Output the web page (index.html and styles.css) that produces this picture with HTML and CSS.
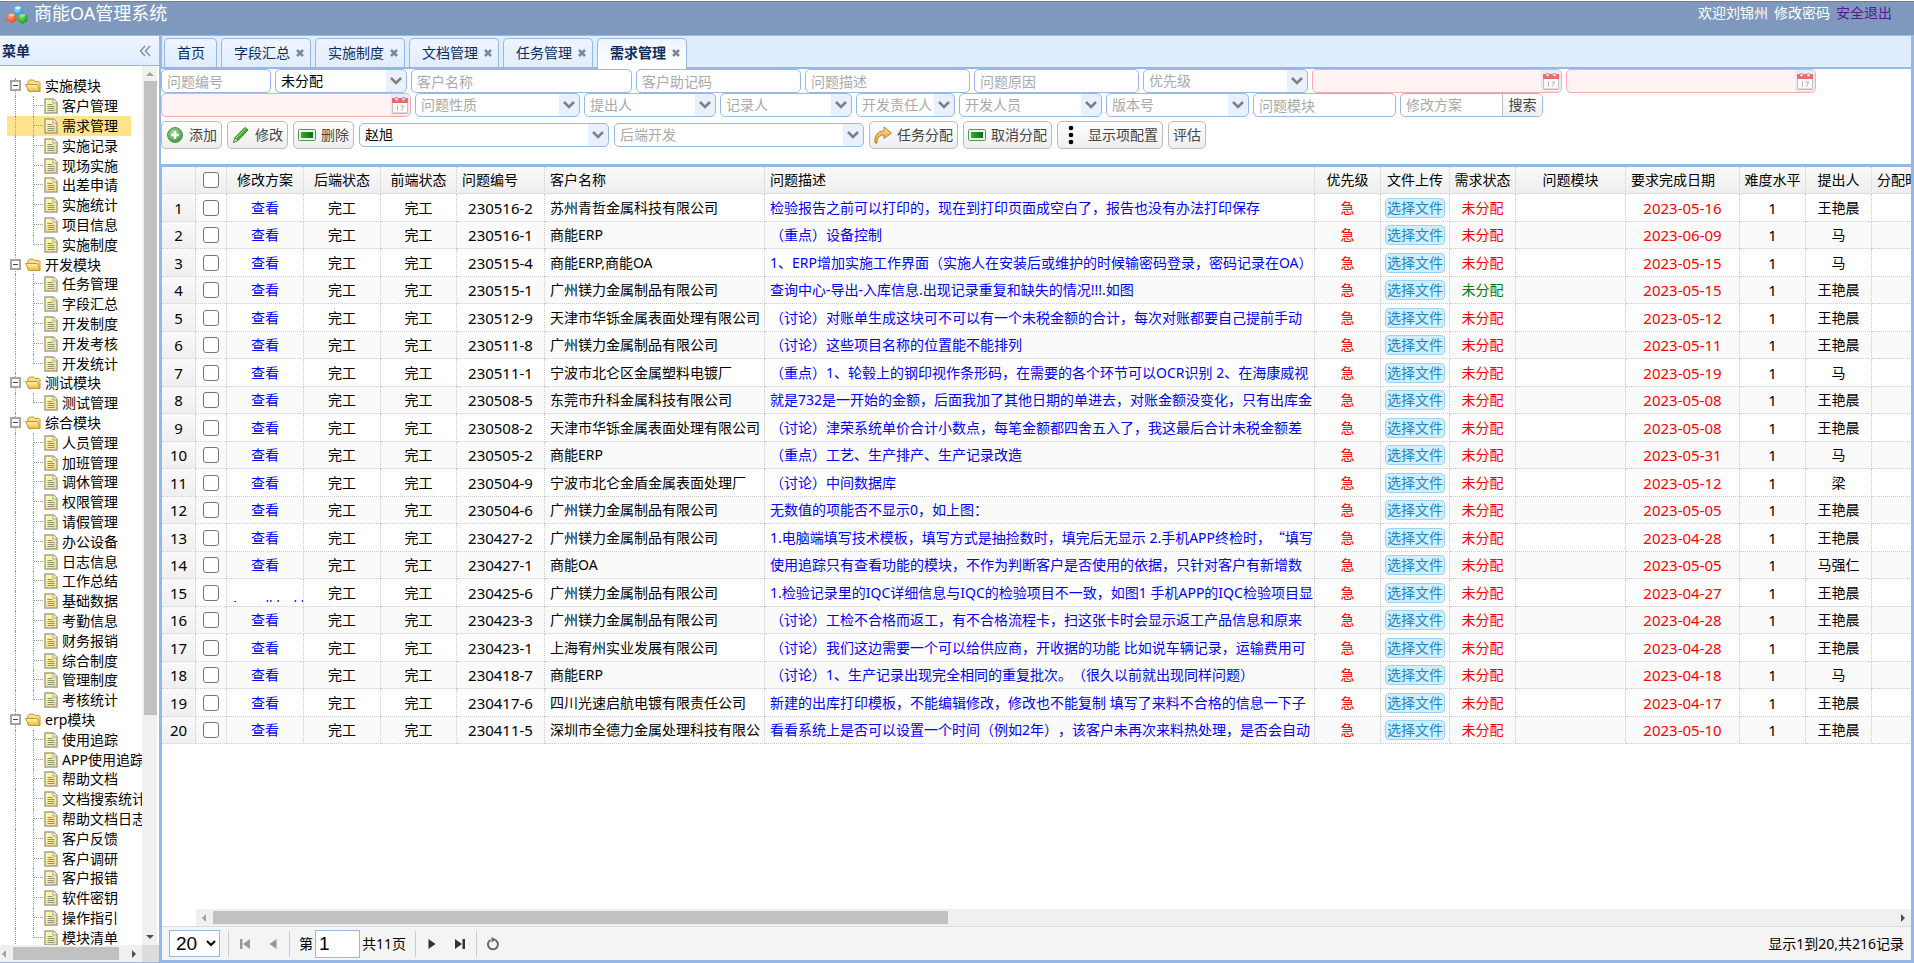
FILE: index.html
```html
<!DOCTYPE html>
<html lang="zh-CN">
<head>
<meta charset="utf-8">
<title>商能OA管理系统</title>
<link rel="stylesheet" href="styles.css">
</head>
<body>
<svg class="sprite" aria-hidden="true">
  <defs>
    <linearGradient id="g-folder" x1="0" y1="0" x2="0" y2="1"><stop offset="0" stop-color="#fff6b8"/><stop offset="1" stop-color="#e9b93c"/></linearGradient>
    <linearGradient id="g-file" x1="0" y1="0" x2="1" y2="1"><stop offset="0" stop-color="#ffffb5"/><stop offset="1" stop-color="#fbd98c"/></linearGradient>
    <linearGradient id="g-green" x1="0" y1="0" x2="1" y2="0"><stop offset="0" stop-color="#2fae2f"/><stop offset="1" stop-color="#0b720b"/></linearGradient>
    <linearGradient id="g-arrow" x1="0" y1="0" x2="0" y2="1"><stop offset="0" stop-color="#ffe08a"/><stop offset="1" stop-color="#f0941a"/></linearGradient>
    <radialGradient id="g-add" cx=".4" cy=".35" r=".7"><stop offset="0" stop-color="#a5d99a"/><stop offset="1" stop-color="#3d9443"/></radialGradient>
    <radialGradient id="g-red" cx=".4" cy=".3" r=".8"><stop offset="0" stop-color="#ffa27a"/><stop offset="1" stop-color="#e0400c"/></radialGradient>
    <radialGradient id="g-blue" cx=".4" cy=".3" r=".8"><stop offset="0" stop-color="#a5e4ff"/><stop offset="1" stop-color="#1586cf"/></radialGradient>
    <radialGradient id="g-lime" cx=".4" cy=".3" r=".8"><stop offset="0" stop-color="#7fe07a"/><stop offset="1" stop-color="#0c8a1c"/></radialGradient>
    <symbol id="i-folder" viewBox="0 0 16 16"><path d="M3 13V3.500l1.500-1.500h4l1.500 1.500h4l1 1V13z" fill="#f8df8c" stroke="#c9962a"/><path d="M.5 6.500h12l2.500 7H4z" fill="url(#g-folder)" stroke="#c9962a"/></symbol>
    <symbol id="i-file" viewBox="0 0 14 16"><path d="M1 1h8.500L13 4.500V15H1z" fill="url(#g-file)" stroke="#a3a18c" stroke-width="1.500"/><path d="M9 1v4h4" fill="#fff" stroke="#a3a18c"/><path d="M3.500 6.500h5M3.500 8.500h7M3.500 10.500h7M3.500 12.500h7" stroke="#8f9474"/></symbol>
    <symbol id="i-date" viewBox="0 0 16 18"><path d="M.5 3.500h15V17H.5z" fill="#fbf8f6" stroke="#c9c0bd"/><path d="M0 2h16v5H0z" fill="#ee6a66"/><circle cx="4.500" cy="3" r="1.700" fill="#f6efef" stroke="#c88"/><circle cx="11.500" cy="3" r="1.700" fill="#f6efef" stroke="#c88"/><path d="M5.500 9.500v5M8.500 10h3l-2 4.500" fill="none" stroke="#b9b4b4"/><path d="M1 17.500h14" stroke="#bbb"/></symbol>
    <symbol id="i-cut" viewBox="0 0 18 16"><rect x=".5" y="2.500" width="17" height="11" rx="1" fill="#eaf5ea" stroke="#4d9a52"/><path d="M3 5h12v6H3z" fill="url(#g-green)"/></symbol>
  </defs>
</svg>

<div class="app">
  <header class="topbar">
    <svg class="logo" viewBox="0 0 22 20" aria-hidden="true">
      <path d="M12 1l4.500 2v5L12 10.500 7.500 8V3z" fill="url(#g-blue)"/>
      <path d="M5.500 8l5 2v5.500l-5 2.500-5-2.500V10z" fill="url(#g-red)"/>
      <path d="M16.500 8.500l5 2V16l-5 3-5-3v-5.500z" fill="url(#g-lime)"/>
      <ellipse cx="12" cy="2.800" rx="3" ry="1.300" fill="#d3f2ff"/><ellipse cx="5.500" cy="10" rx="3" ry="1.300" fill="#ffc1a0"/><ellipse cx="16.500" cy="10.500" rx="3" ry="1.300" fill="#98e88e"/>
    </svg>
    <h1 class="brand">商能OA管理系统</h1>
    <nav class="account"><span>欢迎刘锦州</span><a href="#" class="account-link">修改密码</a><a href="#" class="account-exit">安全退出</a></nav>
  </header>

  <div class="body">
    <aside class="sidebar">
      <div class="side-head"><h2 class="side-title">菜单</h2>
        <button class="collapse" type="button" aria-label="收起"><svg viewBox="0 0 12 12" width="12" height="12"><path d="M6 1L1.500 6 6 11M11 1L6.500 6 11 11" fill="none" stroke="#8a919c" stroke-width="1.500"/></svg></button>
      </div>
      <div class="side-body">
        <ul class="tree" id="tree"></ul>
        <div class="vbar"><span class="tri up"></span><span class="vthumb"></span><span class="tri down"></span></div>
        <div class="hbar side-hbar"><span class="tri left"></span><span class="hthumb"></span><span class="tri right"></span></div>
        <div class="corner"></div>
      </div>
    </aside>

    <main class="main">
      <nav class="tabs" id="tabs"></nav>

      <form class="toolbar">
        <div class="row" id="filters1"></div>
        <div class="row" id="filters2"></div>
        <div class="row actions">
          <button type="button" class="btn"><svg width="18" height="18" viewBox="0 0 18 18"><circle cx="9" cy="9" r="7.500" fill="url(#g-add)" stroke="#4b9a50"/><path d="M9 5v8M5 9h8" stroke="#fff" stroke-width="2.500"/></svg>添加</button>
          <button type="button" class="btn"><svg width="18" height="18" viewBox="0 0 18 18"><path d="M1.500 16.500l1.500-5L13 1.500l3 2.500L6 14.500z" fill="#41b02d" stroke="#2b7d24"/><path d="M4 12L14 2.500" stroke="#a6e88f"/><path d="M1.500 16.500l1.500-4.500 2.500 2.500z" fill="#e8d9b0" stroke="#777" stroke-width=".5"/></svg>修改</button>
          <button type="button" class="btn"><svg width="18" height="16"><use href="#i-cut"/></svg>删除</button>
          <select class="field combo w250" aria-label="前端开发"><option>赵旭</option></select>
          <select class="field combo w250 empty" aria-label="后端开发"><option>后端开发</option></select>
          <button type="button" class="btn"><svg width="18" height="18" viewBox="0 0 18 18"><path d="M1 17C0 9 4 5 10 5V1l7.500 6L10 12.500V9C6 9 3 11 3 17z" fill="url(#g-arrow)" stroke="#a98a55"/></svg>任务分配</button>
          <button type="button" class="btn"><svg width="18" height="16"><use href="#i-cut"/></svg>取消分配</button>
          <button type="button" class="btn wide"><svg width="18" height="20" viewBox="0 0 18 20"><circle cx="9" cy="3" r="2.300"/><circle cx="9" cy="10" r="2.300"/><circle cx="9" cy="17" r="2.300"/></svg>显示项配置</button>
          <button type="button" class="btn">评估</button>
        </div>
      </form>

      <section class="grid">
        <div class="grid-view">
          <table class="data">
            <colgroup><col class="c34"><col class="c31"><col class="c77"><col class="c77"><col class="c76"><col class="c88"><col class="c220"><col class="c550"><col class="c66"><col class="c69"><col class="c66"><col class="c110"><col class="c114"><col class="c66"><col class="c66"><col class="c110"></colgroup>
            <thead><tr><th></th><th><input type="checkbox" class="check" aria-label="全选"></th><th>修改方案</th><th>后端状态</th><th>前端状态</th><th class="left">问题编号</th><th class="left">客户名称</th><th class="left">问题描述</th><th>优先级</th><th>文件上传</th><th>需求状态</th><th>问题模块</th><th class="left">要求完成日期</th><th>难度水平</th><th>提出人</th><th class="left">分配时间</th></tr></thead>
            <tbody id="rows"></tbody>
          </table>
        </div>
        <div class="hbar grid-hbar"><span class="tri left"></span><span class="hthumb"></span><span class="tri right"></span></div>
        <footer class="pager">
          <select class="page-size" aria-label="每页条数"><option>20</option></select>
          <span class="sep"></span>
          <button type="button" class="pbtn off" aria-label="首页"><svg width="12" height="12"><path d="M1 1h2.500v10H1zM11 1v10L4 6z"/></svg></button>
          <button type="button" class="pbtn off" aria-label="上一页"><svg width="12" height="12"><path d="M9.500 1v10L2.500 6z"/></svg></button>
          <span class="sep"></span>
          <label class="page-label" for="page">第</label><input class="page-input" id="page" value="1"><span class="page-total">共11页</span>
          <span class="sep"></span>
          <button type="button" class="pbtn" aria-label="下一页"><svg width="12" height="12"><path d="M2.500 1v10l7-5z"/></svg></button>
          <button type="button" class="pbtn" aria-label="末页"><svg width="12" height="12"><path d="M8.500 1H11v10H8.500zM1 1v10l7-5z"/></svg></button>
          <span class="sep"></span>
          <button type="button" class="pbtn" aria-label="刷新"><svg width="14" height="14" viewBox="0 0 14 14"><path d="M4.500 3A5 5 0 1 0 9 2.800" fill="none" stroke="#6b6461" stroke-width="2"/><path d="M5.500 0v5.500L10 2.500z" fill="#6b6461"/></svg></button>
          <span class="page-info">显示1到20,共216记录</span>
        </footer>
      </section>
    </main>
  </div>
</div>
<script src="app.js"></script>
</body>
</html>
```

FILE: styles.css
```css
* { box-sizing: border-box; }

body {
  margin: 0;
  font: 14px/20px "Noto Sans", "Noto Sans CJK SC", sans-serif;
  text-spacing-trim: space-all;
  color: #000;
  background: #fff;
}
button, input, select { font: inherit; color: inherit; margin: 0; }
a { text-decoration: none; }
.sprite { position: absolute; width: 0; height: 0; }

.app { display: flex; flex-direction: column; height: 100vh; padding-top: 1px; overflow: hidden; }

/* top bar */
.topbar {
  display: flex;
  align-items: flex-start;
  flex: none;
  height: 35px;
  padding: 0 22px 0 6px;
  background: #7f99be;
  border-top: 1px solid #777f86;
  border-bottom: 1px solid #95b8e7;
  color: #fff;
}
.logo { width: 22px; height: 20px; margin-top: 3px; }
.brand { margin: 0 auto 0 6px; font-size: 18px; line-height: 22px; font-weight: 400; }
.account { display: flex; gap: 6px; line-height: 22px; }
.account-link { color: #fff; }
.account-exit { color: #551a8b; }

.body { display: flex; flex: 1; min-height: 0; }

/* sidebar */
.sidebar { display: flex; flex-direction: column; flex: none; width: 159px; border-bottom: 1px solid #95b8e7; }
.side-head {
  display: flex;
  align-items: center;
  justify-content: space-between;
  height: 30px;
  padding: 0 8px 0 2px;
  background: linear-gradient(#eff5ff, #e0ecff);
  border-bottom: 1px solid #95b8e7;
}
.side-title { margin: 0; font-size: 14px; color: #0e2d5f; }
.collapse { display: flex; padding: 0; border: 0; background: none; }
.side-body { display: grid; grid-template: minmax(0, 1fr) 17px / minmax(0, 1fr) 17px; flex: 1; min-height: 0; }
.tree { margin: 0; padding: 10px 0 0 7px; list-style: none; overflow: hidden; white-space: nowrap; }
.node { display: flex; align-items: center; height: 20px; width: 124px; }
.node:nth-child(5n) { height: 19px; }
.node.on { background: #ffe48d; }
.node a { color: #000; }
.trunk, .branch, .twist { position: relative; flex: none; align-self: stretch; }
.trunk, .twist { width: 18px; }
.branch { width: 19px; }
.trunk::before, .twist::before, .branch::before { content: ""; position: absolute; left: 8px; top: 0; bottom: 0; border-left: 1px dotted #999; }
.branch::after { content: ""; position: absolute; left: 9px; right: 1px; top: 9px; border-top: 1px dotted #999; }
.branch.last::before { bottom: 50%; }
.node.first .twist::before { top: 2px; }
.twist i { position: absolute; left: 3px; top: 4px; width: 11px; height: 11px; border: 2px solid #a5a5a5; background: linear-gradient(#444, #444) center / 5px 1px no-repeat #fff; }
.folder { flex: none; width: 16px; height: 16px; margin-right: 4px; }
.file { flex: none; width: 14px; height: 16px; margin-right: 4px; }

/* scroll bars */
.vbar { display: flex; flex-direction: column; align-items: center; width: 15px; background: #f0f0f0; padding: 6px 0; }
.vthumb { width: 13px; flex: 0 1 634px; margin: 5px 0 auto 2px; background: #c1c1c1; }
.hbar { display: flex; align-items: center; background: #f0f0f0; }
.hthumb { height: 13px; background: #c1c1c1; }
.corner { background: #dcdcdc; }
.tri { flex: none; width: 0; height: 0; border: 4px solid transparent; }
.tri.up { border-top: 0; border-bottom-color: #a3a3a3; }
.tri.down { border-bottom: 0; border-top-color: #505050; }
.tri.left { border-left: 0; border-right-color: #a3a3a3; }
.tri.right { border-right: 0; border-left-color: #505050; }
.side-hbar { padding: 0 6px 0 2px; }
.side-hbar .hthumb { flex: 0 1 106px; margin: 0 auto 0 7px; }
.grid-hbar { flex: none; height: 17px; margin-left: 34px; padding: 0 6px; }
.grid-hbar .hthumb { flex: 0 1 735px; margin: 0 auto 0 7px; }

/* tabs */
.main { display: flex; flex-direction: column; flex: 1; min-width: 0; border-left: 3px solid #95b8e7; border-right: 3px solid #95b8e7; border-bottom: 3px solid #95b8e7; }
.tabs { display: flex; align-items: flex-end; gap: 4px; flex: none; height: 33px; padding-left: 2px; background: #e0ecff; border-bottom: 2px solid #95b8e7; }
.tab {
  display: flex;
  align-items: center;
  gap: 6px;
  height: 29px;
  padding: 0 6px 0 12px;
  border: 1px solid #95b8e7;
  border-bottom: 0;
  border-radius: 5px 5px 0 0;
  background: linear-gradient(#eff5ff, #e0ecff);
  color: #0e2d5f;
}
.tab.home { padding-right: 11px; }
.tab.on { background: linear-gradient(#eff5ff, #fff); font-weight: 700; height: 31px; margin-bottom: -2px; padding-bottom: 2px; }
.tab a { color: inherit; }
.close { display: flex; padding: 0; border: 0; background: none; }

/* filter rows and actions */
.toolbar { flex: none; height: 95px; background: #fff; margin: 0 0 0 -1px; }
.row { display: flex; align-items: center; gap: 4px; height: 24px; }
.actions { gap: 5px; height: 28px; margin-top: 4px; }
.field { flex: none; height: 24px; padding: 0 5px; border: 1px solid #95b8e7; border-radius: 5px; background-color: #fff; outline: 0; min-width: 0; }
.field::placeholder { color: #a9a9a9; opacity: 1; }
.combo {
  appearance: none;
  padding-right: 20px;
  background-image: url("data:image/svg+xml,%3Csvg xmlns='http://www.w3.org/2000/svg' width='20' height='22'%3E%3Cpath fill='%23e9f1ff' d='M0 0h20v22H0z'/%3E%3Cpath d='M5 8l5 5 5-5' fill='none' stroke='%23808080' stroke-width='2.500'/%3E%3C/svg%3E");
  background-repeat: no-repeat;
  background-position: right center;
}
.empty { color: #a9a9a9; }
.date, .search { display: flex; flex: none; height: 24px; border: 1px solid #ffa8a8; border-radius: 5px; background: #fff3f3; overflow: hidden; }
.date input, .search input { flex: 1; min-width: 0; border: 0; background: none; outline: 0; padding: 0 5px; }
.date button { display: flex; align-items: center; justify-content: center; width: 20px; padding: 0; border: 0; background: #eaeaf8; }
.search { border-color: #95b8e7; background: #fff; }
.search input::placeholder { color: #a9a9a9; opacity: 1; }
.search button { flex: none; width: 40px; padding: 0; border: 0; border-left: 1px solid #bbb; background: linear-gradient(#fff, #eee); color: #444; }
.w99 { width: 99px; }
.w110 { width: 110px; }
.w132 { width: 132px; }
.w143 { width: 143px; }
.w165 { width: 165px; }
.w220 { width: 221px; }
.w250 { width: 250px; }
.btn { display: flex; align-items: center; gap: 5px; flex: none; height: 28px; padding: 0 4px; border: 1px solid #bbb; border-radius: 5px; background: linear-gradient(#fff, #eee); color: #444; white-space: nowrap; }
.btn.wide { gap: 8px; }

/* data grid */
.grid { display: flex; flex-direction: column; flex: 1; min-height: 0; border-top: 3px solid #95b8e7; }
.grid-view { flex: 1; min-height: 0; overflow: hidden; }
.data { table-layout: fixed; width: 1326px; border-spacing: 0; }
.data th, .data td { padding: 0; border: 0 dotted #ccc; border-width: 0 1px 1px 0; text-align: center; font-weight: 400; white-space: nowrap; overflow: hidden; line-height: 20px; }
.data th { height: 27px; background: linear-gradient(#f9f9f9, #efefef); border-bottom: 1px solid #ddd; }
.data td { height: 27px; }
.data tr:nth-child(odd) td { height: 28px; }
.data tr:nth-child(even) td { background: #fafafa; }
.data tbody td.no { background: linear-gradient(#f9f9f9, #efefef); }
.data .left { text-align: left; padding-left: 5px; }
.data .num { font-size: 15px; }
.data a { color: #00f; }
.data .red { color: #f00; }
.data .green { color: #008000; }
.fullwidth { font-family: "Noto Sans CJK SC", sans-serif; }
.check { display: block; appearance: none; width: 16px; height: 16px; margin: 0 auto; border: 1px solid #767676; border-radius: 3px; background: #fff; }
.upload { height: 20px; padding: 0 1px; border: 1px solid #99d3f5; border-radius: 4px; background: #d0eeff; color: #1e88c7; line-height: 18px; display: block; margin: 0 auto; }
.clip { display: block; height: 18px; padding-top: 12px; margin-left: 4px; overflow: hidden; text-align: left; }
.c31 { width: 31px; } .c34 { width: 34px; } .c66 { width: 66px; } .c69 { width: 69px; }
.c76 { width: 76px; } .c77 { width: 77px; } .c88 { width: 88px; } .c110 { width: 110px; }
.c114 { width: 114px; } .c220 { width: 220px; } .c550 { width: 550px; }

/* pager */
.pager { display: flex; align-items: center; flex: none; height: 34px; padding: 0 7px; background: #f4f4f4; border-top: 1px solid #ddd; }
.page-size, .page-input { font-family: "Liberation Sans", sans-serif; font-size: 19px; border: 1px solid #95b8e7; background: #fff; }
.page-size { width: 51px; height: 27px; margin-right: 6px; padding: 0 0 0 2px; }
.sep { width: 1px; height: 26px; margin: 0 2px; background: #ccc; }
.pbtn { display: flex; align-items: center; justify-content: center; width: 28px; height: 26px; padding: 0; border: 0; background: none; fill: #333; }
.pbtn.off { fill: #999; }
.page-label { margin-left: 7px; }
.page-input { width: 45px; height: 28px; margin: 0 2px; padding: 0 3px; }
.page-total { margin-right: 7px; }
.page-info { margin-left: auto; }
```

FILE: app.js
```js
const menu = [
  ['实施模块', '客户管理 需求管理 实施记录 现场实施 出差申请 实施统计 项目信息 实施制度'],
  ['开发模块', '任务管理 字段汇总 开发制度 开发考核 开发统计'],
  ['测试模块', '测试管理'],
  ['综合模块', '人员管理 加班管理 调休管理 权限管理 请假管理 办公设备 日志信息 工作总结 基础数据 考勤信息 财务报销 综合制度 管理制度 考核统计'],
  ['erp模块', '使用追踪 APP使用追踪 帮助文档 文档搜索统计 帮助文档日志 客户反馈 客户调研 客户报错 软件密钥 操作指引 模块清单'],
];
document.getElementById('tree').innerHTML = menu.map(([group, list], g) => {
  const items = list.split(' ');
  return `<li class="node${g ? '' : ' first'}"><span class="twist"><i></i></span><svg class="folder"><use href="#i-folder"/></svg><a href="#">${group}</a></li>` +
    items.map((t, i) => `<li class="node${t === '需求管理' ? ' on' : ''}"><span class="trunk"></span><span class="branch${i === items.length - 1 ? ' last' : ''}"></span><svg class="file"><use href="#i-file"/></svg><a href="#">${t}</a></li>`).join('');
}).join('');

document.getElementById('tabs').innerHTML = ['首页', '字段汇总', '实施制度', '文档管理', '任务管理', '需求管理'].map((t, i) =>
  `<div class="tab${i === 0 ? ' home' : ''}${i === 5 ? ' on' : ''}"><a href="#">${t}</a>${i ? '<button class="close" type="button" aria-label="关闭"><svg width="8" height="8"><path d="M1 1l6 6M7 1L1 7" stroke="#7c8798" stroke-width="2.500"/></svg></button>' : ''}</div>`).join('');

const make = {
  text: (t, w) => `<input class="field w${w}" placeholder="${t}" aria-label="${t}">`,
  combo: (t, w) => `<select class="field combo w${w}${t === '未分配' ? '' : ' empty'}" aria-label="${t}"><option>${t}</option></select>`,
  date: (t, w) => `<div class="date w${w}"><input aria-label="${t}"><button type="button" aria-label="选择日期"><svg width="16" height="18"><use href="#i-date"/></svg></button></div>`,
  search: (t, w) => `<div class="search w${w}"><input placeholder="${t}" aria-label="${t}"><button type="button">搜索</button></div>`,
};
const fill = (id, list) => { document.getElementById(id).innerHTML = list.map(([k, t, w]) => make[k](t, w)).join(''); };
fill('filters1', [['text', '问题编号', 110], ['combo', '未分配', 132], ['text', '客户名称', 220], ['text', '客户助记码', 165], ['text', '问题描述', 165], ['text', '问题原因', 165], ['combo', '优先级', 165], ['date', '开始日期', 250], ['date', '结束日期', 250]]);
fill('filters2', [['date', '完成日期', 250], ['combo', '问题性质', 165], ['combo', '提出人', 132], ['combo', '记录人', 132], ['combo', '开发责任人', 99], ['combo', '开发人员', 143], ['combo', '版本号', 143], ['text', '问题模块', 143], ['search', '修改方案', 143]]);

const W = '王艳晨', GZ = '广州镁力金属制品有限公司';
const records = [
  ['230516-2', '苏州青哲金属科技有限公司', '检验报告之前可以打印的，现在到打印页面成空白了，报告也没有办法打印保存', '05-16', W],
  ['230516-1', '商能ERP', '（重点）设备控制', '06-09', '马'],
  ['230515-4', '商能ERP,商能OA', '1、ERP增加实施工作界面（实施人在安装后或维护的时候输密码登录，密码记录在OA）', '05-15', '马'],
  ['230515-1', GZ, '查询中心-导出-入库信息.出现记录重复和缺失的情况!!!.如图', '05-15', W],
  ['230512-9', '天津市华铄金属表面处理有限公司', '（讨论）对账单生成这块可不可以有一个未税金额的合计，每次对账都要自己提前手动', '05-12', W],
  ['230511-8', GZ, '（讨论）这些项目名称的位置能不能排列', '05-11', W],
  ['230511-1', '宁波市北仑区金属塑料电镀厂', '（重点）1、轮毂上的钢印视作条形码，在需要的各个环节可以OCR识别 2、在海康威视', '05-19', '马'],
  ['230508-5', '东莞市升科金属科技有限公司', '就是732是一开始的金额，后面我加了其他日期的单进去，对账金额没变化，只有出库金', '05-08', W],
  ['230508-2', '天津市华铄金属表面处理有限公司', '（讨论）津荣系统单价合计小数点，每笔金额都四舍五入了，我这最后合计未税金额差', '05-08', W],
  ['230505-2', '商能ERP', '（重点）工艺、生产排产、生产记录改造', '05-31', '马'],
  ['230504-9', '宁波市北仑金盾金属表面处理厂', '（讨论）中间数据库', '05-12', '梁'],
  ['230504-6', GZ, '无数值的项能否不显示0，如上图：', '05-05', W],
  ['230427-2', GZ, '1.电脑端填写技术模板，填写方式是抽捡数时，填完后无显示 2.手机APP终检时，<span class="fullwidth">“</span>填写', '04-28', W],
  ['230427-1', '商能OA', '使用追踪只有查看功能的模块，不作为判断客户是否使用的依据，只针对客户有新增数', '05-05', '马强仁'],
  ['230425-6', GZ, '1.检验记录里的IQC详细信息与IQC的检验项目不一致，如图1 手机APP的IQC检验项目显', '04-27', W],
  ['230423-3', GZ, '（讨论）工检不合格而返工，有不合格流程卡，扫这张卡时会显示返工产品信息和原来', '04-28', W],
  ['230423-1', '上海宥州实业发展有限公司', '（讨论）我们这边需要一个可以给供应商，开收据的功能 比如说车辆记录，运输费用可', '04-28', W],
  ['230418-7', '商能ERP', '（讨论）1、生产记录出现完全相同的重复批次。（很久以前就出现同样问题）', '04-18', '马'],
  ['230417-6', '四川光速启航电镀有限责任公司', '新建的出库打印模板，不能编辑修改，修改也不能复制 填写了来料不合格的信息一下子', '04-17', W],
  ['230411-5', '深圳市全德力金属处理科技有限公', '看看系统上是否可以设置一个时间（例如2年），该客户未再次来料热处理，是否会自动', '05-10', W],
];
document.getElementById('rows').innerHTML = records.map(([id, customer, text, date, by], i) => `<tr>
  <td class="no num">${i + 1}</td><td><input type="checkbox" class="check" aria-label="选择第${i + 1}行"></td>
  <td>${i === 14 ? '<a href="#" class="clip">1 scr ll b d ll</a>' : '<a href="#">查看</a>'}</td><td>完工</td><td>完工</td>
  <td class="num">${id}</td><td class="left">${customer}</td><td class="left"><a href="#">${text}</a></td><td class="red">急</td>
  <td><button type="button" class="upload">选择文件</button></td><td class="${i === 3 ? 'green' : 'red'}">未分配</td><td></td>
  <td class="red num">2023-${date}</td><td class="num">1</td><td>${by}</td><td></td></tr>`).join('');
```
